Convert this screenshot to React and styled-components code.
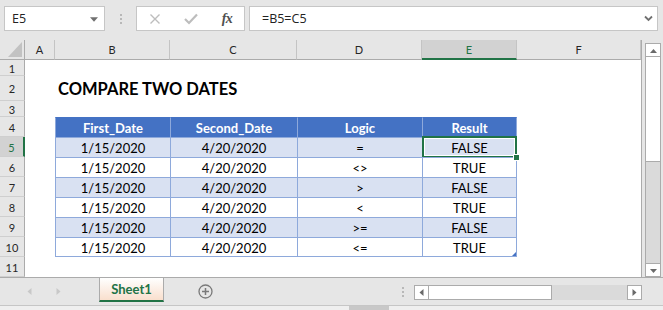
import React from 'react'
import styled, { createGlobalStyle, css } from 'styled-components'

const GlobalStyle = createGlobalStyle`
  html, body {
    margin: 0;
    padding: 0;
  }
  body {
    width: 663px;
    height: 310px;
    overflow: hidden;
    background: #e6e6e6;
    font-family: Lato, "Liberation Sans", sans-serif;
  }
`

const GREEN = '#217346'
const EDGE = '#ababab'

const Window = styled.div`
  width: 663px;
  height: 310px;
  display: flex;
  flex-direction: column;
  background: #e6e6e6;
`

// ---- formula bar ----
const FormulaBar = styled.div`
  height: 41px;
  box-sizing: border-box;
  display: flex;
  align-items: flex-start;
  padding: 6px 5px 0 4px;
`

const Box = styled.div`
  height: 25px;
  box-sizing: border-box;
  border: 1px solid #c6c6c6;
  background: #fff;
  display: flex;
  align-items: center;
  font-family: "Open Sans", sans-serif;
  font-size: 12.5px;
  color: #222;
`

const NameBox = styled(Box)`
  width: 101px;
  justify-content: space-between;
  padding: 0 6px 0 7px;
`

const Grip = styled.div`
  width: 31px;
  height: 25px;
  display: flex;
  flex-direction: column;
  align-items: center;
  justify-content: center;
  gap: 2px;

  span {
    width: 2px;
    height: 2px;
    background: #b8b8b8;
  }
`

const FxBox = styled(Box)`
  width: 109px;
  display: grid;
  grid-template-columns: repeat(3, 36px);
  justify-items: center;
`

const Fx = styled.span`
  font-family: "Liberation Serif", serif;
  font-style: italic;
  font-weight: 700;
  font-size: 14px;
  color: #505050;
  letter-spacing: -0.5px;
`

const FormulaInput = styled(Box)`
  flex: 1;
  margin-left: 4px;
  justify-content: space-between;
  padding: 0 4px 0 12px;
`

// ---- sheet ----
const Main = styled.div`
  height: 237px;
  display: flex;
  align-items: flex-start;
`

const Sheet = styled.div`
  display: grid;
  grid-template-columns: 25px 30px 115px 127px 125px 95px 124px;
  grid-template-rows: 20px 16px 25px 16px repeat(8, 20px);
  width: 642px;
  height: 237px;
  box-sizing: border-box;
  border-right: 1px solid ${EDGE};
  background: #fff;
`

const Corner = styled.div`
  background: #e6e6e6;
  border-right: 1px solid ${EDGE};
  border-bottom: 1px solid ${EDGE};
  display: flex;
  align-items: flex-end;
  justify-content: flex-end;
  padding: 0 2px 2px 0;
`

const ColHead = styled.div`
  background: ${p => (p.$selected ? '#d2d2d2' : '#e6e6e6')};
  border-right: 1px solid #c4c4c4;
  border-bottom: ${p => (p.$selected ? `2px solid ${GREEN}` : `1px solid ${EDGE}`)};
  color: ${p => (p.$selected ? GREEN : '#262626')};
  font-size: 11px;
  display: flex;
  align-items: center;
  justify-content: center;
`

const RowHead = styled.div`
  background: ${p => (p.$selected ? '#d2d2d2' : '#e6e6e6')};
  border-right: ${p => (p.$selected ? `2px solid ${GREEN}` : `1px solid ${EDGE}`)};
  border-bottom: 1px solid #cfcfcf;
  color: ${p => (p.$selected ? GREEN : '#262626')};
  font-size: 11px;
  padding-top: 1px;
  box-sizing: border-box;
  display: flex;
  align-items: center;
  justify-content: center;
`

const Blank = styled.div``

const Title = styled.div`
  display: flex;
  align-items: flex-end;
  padding: 0 0 2px 3px;
  font-size: 16.5px;
  font-weight: 700;
  line-height: 20px;
  white-space: nowrap;
  color: #000;
`

const Cell = styled.div`
  position: relative;
  display: flex;
  align-items: center;
  justify-content: center;
  padding-top: 1px;
  box-sizing: border-box;
  font-size: 13px;
  line-height: 18px;
  color: #000;
  border-left: 1px solid #8ea9db;
  border-top: 1px solid ${p => (p.$head ? '#4472c4' : '#8ea9db')};
  background: ${p => (p.$head ? '#4472c4' : p.$stripe ? '#d9e1f2' : 'transparent')};
  ${p => p.$head && css`
    color: #fff;
    font-weight: 700;
  `}
  ${p => p.$lastCol && css`border-right: 1px solid #8ea9db;`}
  ${p => p.$lastRow && css`border-bottom: 1px solid #8ea9db;`}
  ${p => p.$selected && css`
    &::after {
      content: '';
      position: absolute;
      left: -1px;
      right: -1px;
      top: -2px;
      bottom: -1px;
      border: 2px solid ${GREEN};
      box-shadow: inset 0 0 0 1px #fff;
    }
    &::before {
      content: '';
      position: absolute;
      right: -4px;
      bottom: -4px;
      width: 5px;
      height: 5px;
      background: ${GREEN};
      border: 1px solid #fff;
      z-index: 2;
    }
  `}
  ${p => p.$resize && css`
    &::after {
      content: '';
      position: absolute;
      right: 0;
      bottom: 0;
      width: 0;
      height: 0;
      border-left: 4px solid transparent;
      border-bottom: 4px solid #4472c4;
    }
  `}
`

// ---- scrollbars ----
const VScroll = styled.div`
  width: 16px;
  height: 234px;
  margin: 3px 0 0 3px;
  display: flex;
  flex-direction: column;
`

const HScroll = styled.div`
  width: 228px;
  height: 15px;
  margin-top: 7px;
  display: flex;
`

const ArrowBtn = styled.div`
  flex: none;
  box-sizing: border-box;
  width: ${p => (p.$vertical ? '16px' : '15px')};
  height: ${p => (p.$vertical ? '14px' : '15px')};
  border: 1px solid ${EDGE};
  background: #fff;
  display: flex;
  align-items: center;
  justify-content: center;
`

const Thumb = styled.div`
  box-sizing: border-box;
  background: #fff;
  border: 1px solid ${EDGE};
  ${p => (p.$vertical
    ? css`height: 105px; border-top: none;`
    : css`width: 123px; border-left: none;`)}
`

const Track = styled.div`
  flex: 1;
  background: #dadada;
  ${p => (p.$vertical
    ? css`border-left: 1px solid ${EDGE}; border-right: 1px solid ${EDGE};`
    : css`border-top: 1px solid #dadada;`)}
`

// ---- tabs ----
const TabBar = styled.div`
  height: 28px;
  box-sizing: border-box;
  border-top: 1px solid ${EDGE};
  display: flex;
  align-items: flex-start;
  padding-right: 21px;
`

const NavArrows = styled.div`
  width: 99px;
  height: 27px;
  display: flex;
  align-items: center;
  gap: 22px;
  padding-left: 26px;
  box-sizing: border-box;
`

const Tab = styled.div`
  width: 65px;
  height: 24px;
  box-sizing: border-box;
  border-left: 1px solid ${EDGE};
  border-right: 1px solid ${EDGE};
  border-bottom: 2px solid ${GREEN};
  background: linear-gradient(#ffffff, #f9dfcd);
  color: ${GREEN};
  font-size: 13px;
  font-weight: 700;
  display: flex;
  align-items: center;
  justify-content: center;
`

const AddSheet = styled.div`
  width: 84px;
  height: 27px;
  display: flex;
  align-items: center;
  padding-left: 34px;
  box-sizing: border-box;
`

const Spacer = styled.div`
  flex: 1;
`

const SplitGrip = styled(Grip)`
  width: 16px;
  height: 27px;
  margin-right: 3px;
`

const Status = styled.div`
  height: 4px;
  border-top: 1px solid #c6c6c6;
  background: #efefef;
  display: flex;

  span {
    margin-left: 349px;
    width: 40px;
    background: #c8c8c8;
  }
`

const Tri = ({ dir, color = '#6a6a6a', size = 7 }) => {
  const pts = {
    up: '0,6 3.5,2 7,6',
    down: '0,2 3.5,6 7,2',
    left: '5.5,0 1.5,3.5 5.5,7',
    right: '1.5,0 5.5,3.5 1.5,7'
  }[dir]
  return (
    <svg width={size} height={size} viewBox='0 0 7 7'>
      <polygon points={pts} fill={color} />
    </svg>
  )
}

const columns = ['A', 'B', 'C', 'D', 'E', 'F']

const data = [
  ['1/15/2020', '4/20/2020', '=', 'FALSE'],
  ['1/15/2020', '4/20/2020', '<>', 'TRUE'],
  ['1/15/2020', '4/20/2020', '>', 'FALSE'],
  ['1/15/2020', '4/20/2020', '<', 'TRUE'],
  ['1/15/2020', '4/20/2020', '>=', 'FALSE'],
  ['1/15/2020', '4/20/2020', '<=', 'TRUE']
]

const headers = ['First_Date', 'Second_Date', 'Logic', 'Result']

const BlankRow = ({ n }) => (
  <>
    <RowHead>{n}</RowHead>
    {columns.map(c => <Blank key={c} />)}
  </>
)

const TableRow = ({ n, values, head }) => (
  <>
    <RowHead $selected={n === 5}>{n}</RowHead>
    <Blank />
    {values.map((v, i) => (
      <Cell
        key={i}
        $head={head}
        $stripe={!head && n % 2 === 1}
        $lastCol={i === 3}
        $lastRow={n === 10}
        $selected={n === 5 && i === 3}
        $resize={n === 10 && i === 3}
      >
        {v}
      </Cell>
    ))}
    <Blank />
  </>
)

const App = () => (
  <Window>
    <GlobalStyle />
    <FormulaBar>
      <NameBox>
        <span>E5</span>
        <Tri dir='down' color='#707070' size={8} />
      </NameBox>
      <Grip><span /><span /><span /></Grip>
      <FxBox>
        <svg width='12' height='12' viewBox='0 0 12 12'>
          <path d='M1.5 1.5 L10.5 10.5 M10.5 1.5 L1.5 10.5' stroke='#bdbdbd' strokeWidth='1.4' />
        </svg>
        <svg width='14' height='12' viewBox='0 0 14 12'>
          <path d='M1 6 L5 10 L13 1.5' stroke='#bdbdbd' strokeWidth='2.2' fill='none' />
        </svg>
        <Fx>fx</Fx>
      </FxBox>
      <FormulaInput>
        <span>=B5=C5</span>
        <svg width='9' height='7' viewBox='0 0 9 7'>
          <path d='M1 1.5 L4.5 5 L8 1.5' stroke='#707070' strokeWidth='1.8' fill='none' />
        </svg>
      </FormulaInput>
    </FormulaBar>

    <Main>
      <Sheet>
        <Corner>
          <svg width='14' height='15' viewBox='0 0 14 15'>
            <polygon points='14,0 14,15 0,15' fill='#c2c2c2' />
          </svg>
        </Corner>
        {columns.map(c => (
          <ColHead key={c} $selected={c === 'E'}>{c}</ColHead>
        ))}

        <BlankRow n={1} />

        <RowHead>2</RowHead>
        <Blank />
        <Title>COMPARE TWO DATES</Title>
        <Blank />
        <Blank />
        <Blank />
        <Blank />

        <BlankRow n={3} />

        <TableRow n={4} values={headers} head />
        {data.map((row, i) => (
          <TableRow key={i} n={i + 5} values={row} />
        ))}

        <BlankRow n={11} />
      </Sheet>

      <VScroll>
        <ArrowBtn $vertical><Tri dir='up' /></ArrowBtn>
        <Thumb $vertical />
        <Track $vertical />
        <ArrowBtn $vertical><Tri dir='down' /></ArrowBtn>
      </VScroll>
    </Main>

    <TabBar>
      <NavArrows>
        <Tri dir='left' color='#c8c8c8' />
        <Tri dir='right' color='#c8c8c8' />
      </NavArrows>
      <Tab>Sheet1</Tab>
      <AddSheet>
        <svg width='15' height='15' viewBox='0 0 15 15'>
          <circle cx='7.5' cy='7.5' r='6.5' stroke='#7a7a7a' strokeWidth='1.3' fill='none' />
          <path d='M7.5 4 V11 M4 7.5 H11' stroke='#7a7a7a' strokeWidth='1.5' />
        </svg>
      </AddSheet>
      <Spacer />
      <SplitGrip><span /><span /><span /></SplitGrip>
      <HScroll>
        <ArrowBtn><Tri dir='left' /></ArrowBtn>
        <Thumb />
        <Track />
        <ArrowBtn><Tri dir='right' /></ArrowBtn>
      </HScroll>
    </TabBar>
    <Status><span /></Status>
  </Window>
)

export default App
